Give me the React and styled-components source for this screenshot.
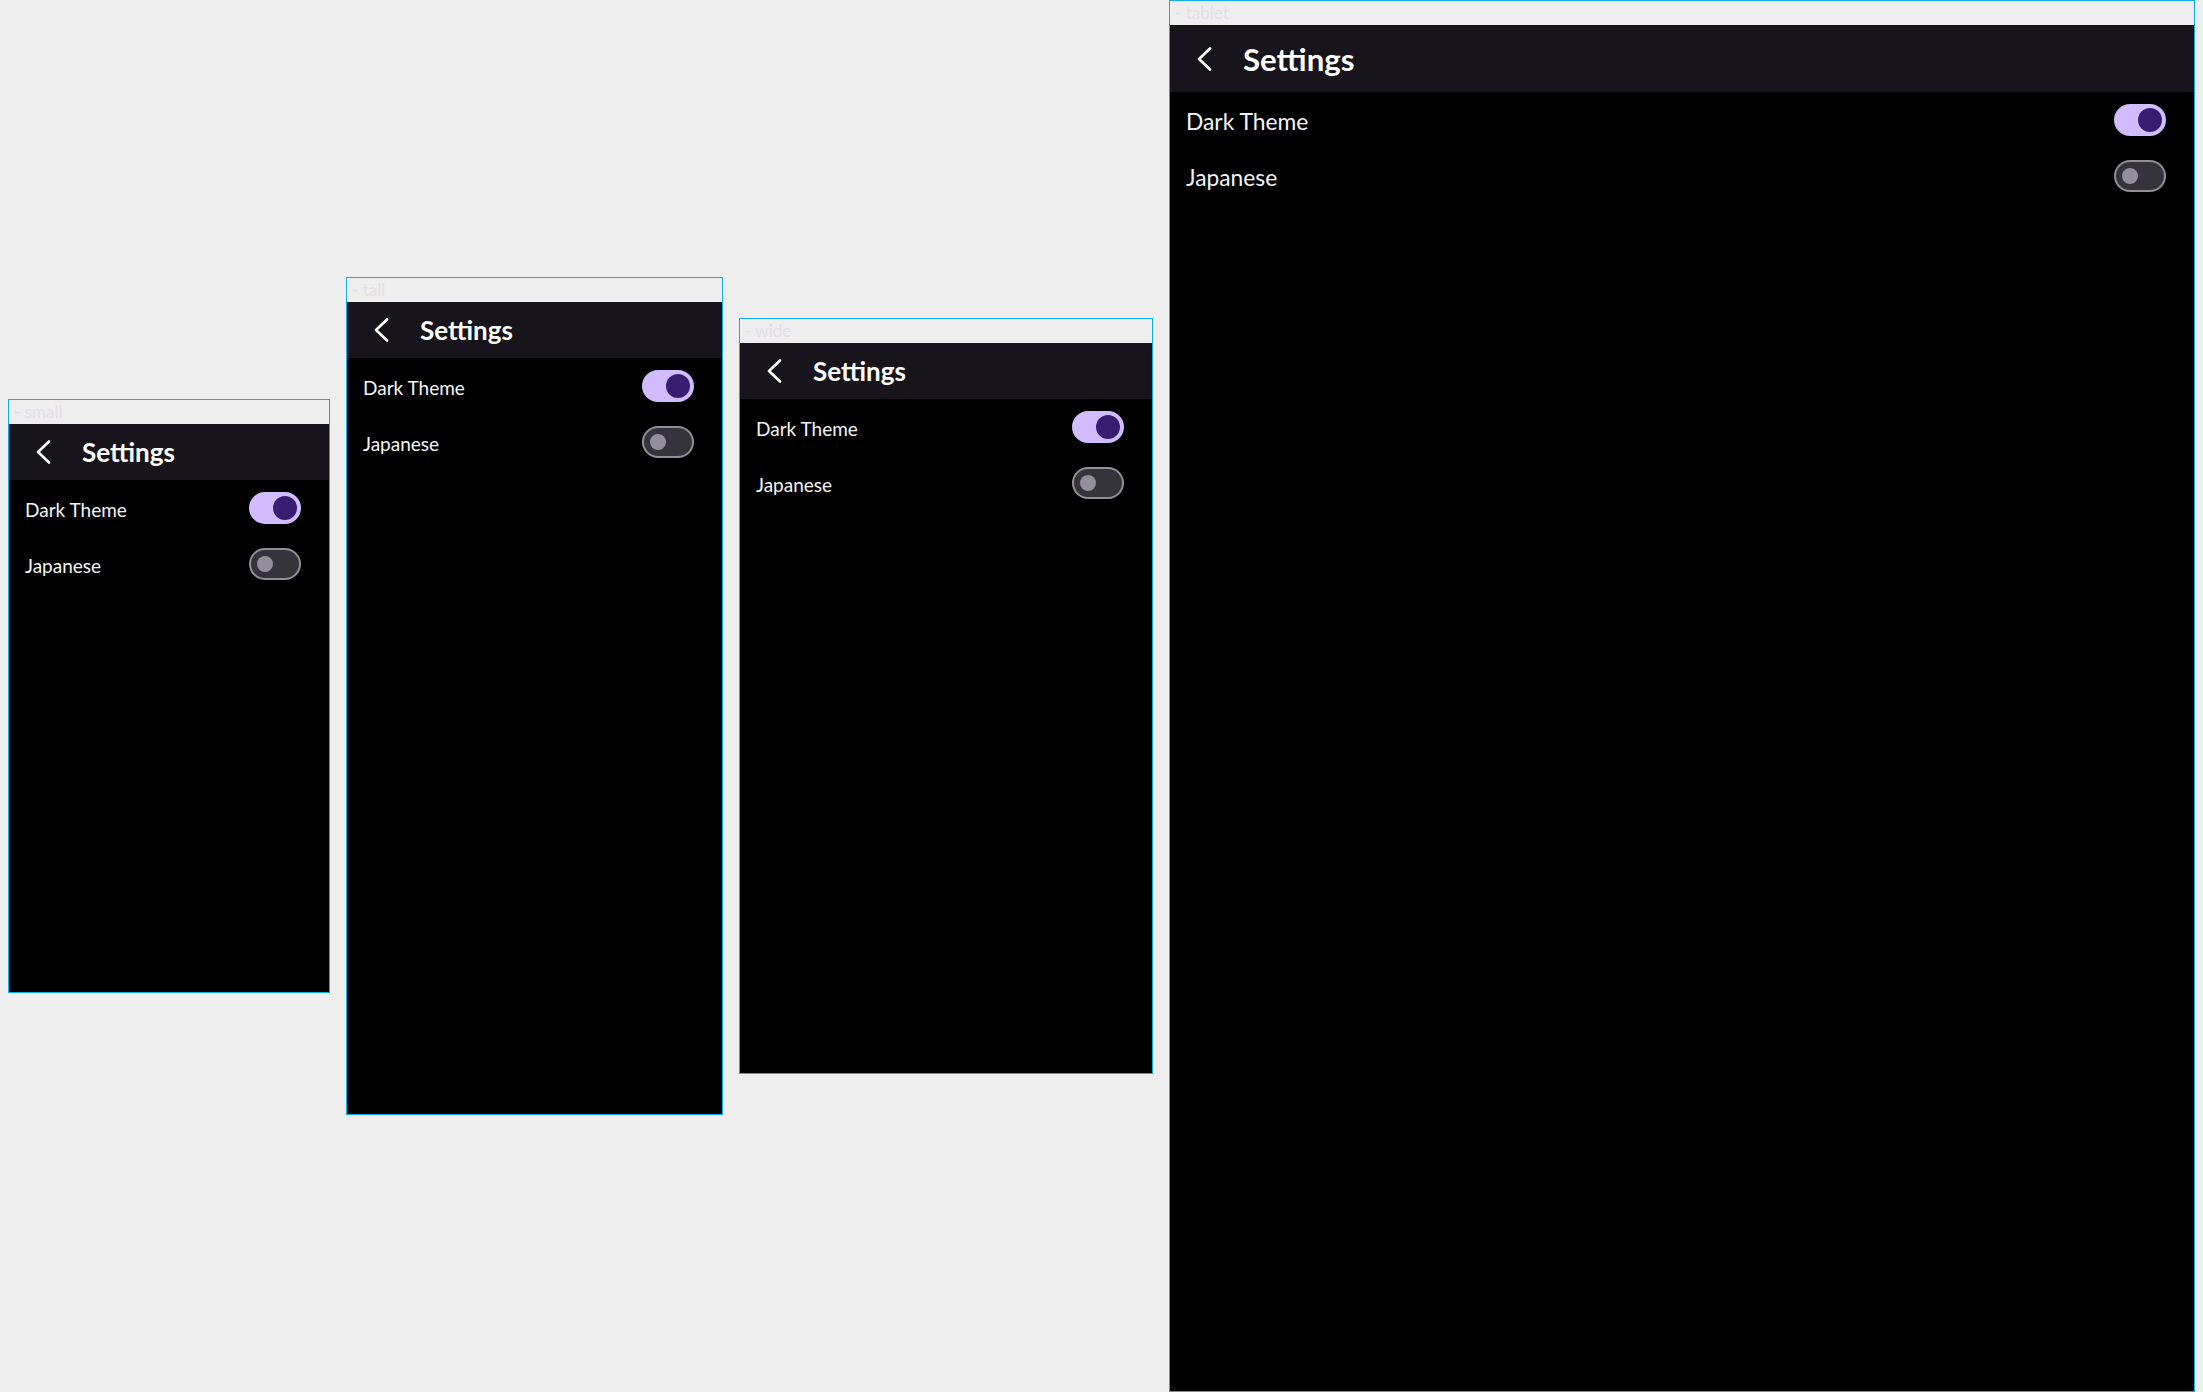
import React, { useState } from 'react';
import styled, { createGlobalStyle } from 'styled-components';

const GlobalStyle = createGlobalStyle`
  html, body {
    margin: 0;
    padding: 0;
    background: #eeeeee;
  }
  body {
    font-family: Lato, "Noto Sans", sans-serif;
  }
  * {
    box-sizing: border-box;
  }
`;

const Page = styled.div`
  display: flex;
  align-items: center;
  gap: 16px;
  height: 1392px;
  padding: 0 8px;
`;

const DeviceFrame = styled.div`
  display: flex;
  flex-direction: column;
  flex-shrink: 0;
  border: 1px solid #12adf0;
`;

const FrameLabel = styled.div`
  height: 24px;
  padding-left: 5px;
  font-size: 17px;
  line-height: 24px;
  color: #e4dfea;
`;

const Screen = styled.div`
  display: flex;
  flex-direction: column;
  width: ${(p) => p.$w}px;
  height: ${(p) => p.$h}px;
  background: #000;
  color: #f6f4f8;
  overflow: hidden;
`;

const Header = styled.header`
  display: flex;
  align-items: center;
  height: ${(p) => Math.round(56 * p.$scale)}px;
  padding-left: 26px;
  background: #17151b;
`;

const BackButton = styled.button`
  display: flex;
  align-items: center;
  justify-content: center;
  width: 16px;
  height: 24px;
  margin-right: 31px;
  padding: 0;
  border: 0;
  background: none;
  color: #fff;
  cursor: pointer;
`;

const Title = styled.h1`
  margin: 0;
  font-size: ${(p) => 26 * p.$scale}px;
  font-weight: 700;
  color: #fff;
`;

const SettingsList = styled.div`
  display: flex;
  flex-direction: column;
`;

const SettingRow = styled.div`
  display: flex;
  align-items: center;
  justify-content: space-between;
  height: 56px;
  padding: 0 28px 0 16px;
`;

const RowLabel = styled.span`
  font-size: ${(p) => 19 * p.$scale}px;
  padding-top: 2px;
`;

const Switch = styled.button`
  display: flex;
  align-items: center;
  width: 52px;
  height: 32px;
  padding: 0;
  border-radius: 16px;
  border: 2px solid ${(p) => (p.$on ? '#d0bcff' : '#938f99')};
  background: ${(p) => (p.$on ? '#d0bcff' : '#36343b')};
  cursor: pointer;
`;

const Thumb = styled.span`
  display: block;
  width: ${(p) => (p.$on ? 24 : 16)}px;
  height: ${(p) => (p.$on ? 24 : 16)}px;
  margin-left: ${(p) => (p.$on ? 22 : 6)}px;
  border-radius: 50%;
  background: ${(p) => (p.$on ? '#381e72' : '#938f99')};
`;

const devices = [
  { name: 'small', w: 320, h: 568, scale: 1 },
  { name: 'tall', w: 375, h: 812, scale: 1 },
  { name: 'wide', w: 412, h: 730, scale: 1 },
  { name: 'tablet', w: 1024, h: 1366, scale: 1.2 },
];

const ChevronBack = () => (
  <svg width="16" height="24" viewBox="0 0 16 24" fill="none">
    <path d="M14 1.5 L3 12 L14 22.5" stroke="currentColor" strokeWidth="2.6" strokeLinecap="round" strokeLinejoin="round" />
  </svg>
);

const SettingsScreen = ({ w, h, scale }) => {
  const [dark, setDark] = useState(true);
  const [japanese, setJapanese] = useState(false);

  return (
    <Screen $w={w} $h={h}>
      <Header $scale={scale}>
        <BackButton aria-label="Back">
          <ChevronBack />
        </BackButton>
        <Title $scale={scale}>Settings</Title>
      </Header>
      <SettingsList>
        <SettingRow>
          <RowLabel $scale={scale}>Dark Theme</RowLabel>
          <Switch $on={dark} onClick={() => setDark((v) => !v)}>
            <Thumb $on={dark} />
          </Switch>
        </SettingRow>
        <SettingRow>
          <RowLabel $scale={scale}>Japanese</RowLabel>
          <Switch $on={japanese} onClick={() => setJapanese((v) => !v)}>
            <Thumb $on={japanese} />
          </Switch>
        </SettingRow>
      </SettingsList>
    </Screen>
  );
};

const App = () => {
  return (
    <>
      <GlobalStyle />
      <Page>
        {devices.map((d) => (
          <DeviceFrame key={d.name}>
            <FrameLabel>- {d.name}</FrameLabel>
            <SettingsScreen w={d.w} h={d.h} scale={d.scale} />
          </DeviceFrame>
        ))}
      </Page>
    </>
  );
};

export default App;
